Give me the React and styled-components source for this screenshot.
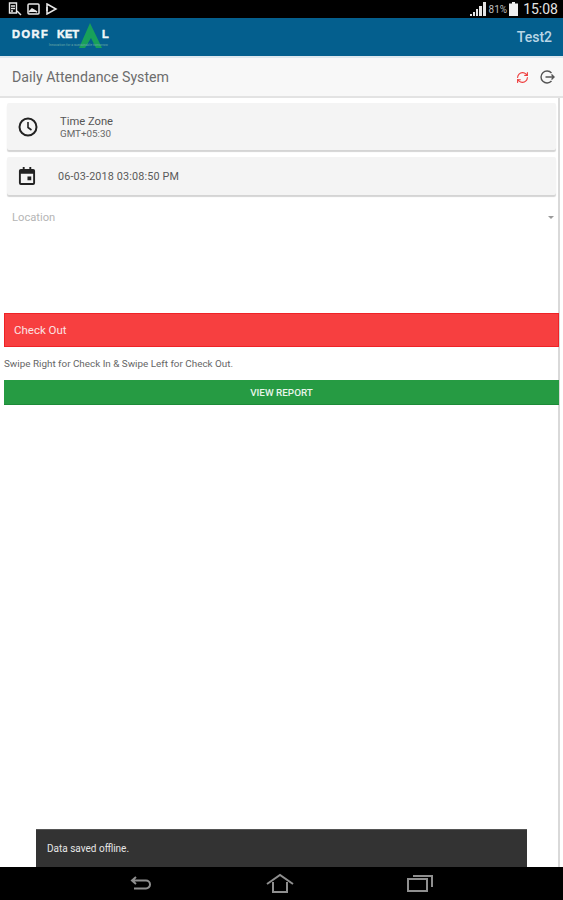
import styled, { createGlobalStyle } from "styled-components";
import { RefreshCw } from "lucide-react";

const GlobalStyle = createGlobalStyle`
  html, body {
    margin: 0;
    padding: 0;
    background: #fff;
    font-family: Roboto, "Liberation Sans", sans-serif;
  }
`;

const Screen = styled.div`
  position: relative;
  width: 563px;
  height: 900px;
  display: flex;
  flex-direction: column;
  overflow: hidden;
  background: #fff;
`;

const StatusBar = styled.div`
  height: 18px;
  background: #000;
  display: flex;
  align-items: center;
  justify-content: space-between;
  padding: 0 5px 0 8px;
  color: #e4e4e4;
`;

const StatusGroup = styled.div`
  display: flex;
  align-items: center;
  gap: ${(props) => props.$gap || 4}px;
`;

const BatteryText = styled.span`
  font-size: 10px;
  color: #bdbdbd;
`;

const Clock = styled.span`
  font-size: 14px;
  margin-left: 3px;
`;

const AppBar = styled.div`
  height: 38px;
  background: #045f8e;
  border-bottom: 2px solid #dfe8ee;
  display: flex;
  align-items: center;
  justify-content: space-between;
  padding: 0 11px 0 12px;
`;

const Logo = styled.div`
  position: relative;
  width: 98px;
  height: 30px;
  margin-top: 2px;
`;

const LogoWord = styled.span`
  position: absolute;
  top: 5px;
  left: ${(props) => props.$left}px;
  font: 900 11px "Liberation Sans", sans-serif;
  letter-spacing: ${(props) => props.$spacing || 0}px;
  color: #f2f6f8;
  -webkit-text-stroke: 0.5px #f2f6f8;
`;

const LogoPeak = styled.svg`
  position: absolute;
  top: 0;
  left: 66px;
`;

const LogoTagline = styled.span`
  position: absolute;
  top: 20px;
  left: 31px;
  width: 65px;
  font-size: 3.5px;
  line-height: 4px;
  text-align: right;
  color: #6aa9a5;
`;

const UserName = styled.span`
  font-size: 14px;
  font-weight: 500;
  color: #b9d6e6;
`;

const TitleBar = styled.div`
  height: 38px;
  flex-shrink: 0;
  background: #f8f8f8;
  border-bottom: 2px solid #e3e3e3;
  display: flex;
  align-items: center;
  justify-content: space-between;
  padding: 0 8px 0 12px;
`;

const Title = styled.span`
  font-size: 14.2px;
  color: #6d6d6d;
`;

const TitleActions = styled.div`
  display: flex;
  align-items: center;
  gap: 10px;
`;

const Content = styled.div`
  flex: 1;
  display: flex;
  flex-direction: column;
  padding: 5px 4px 0 4px;
  border-right: 2px solid #d9d9d9;
  margin-right: 3px;
`;

const InfoCard = styled.div`
  height: ${(props) => props.$height}px;
  margin: 0 -2px 7px 3px;
  background: #f4f4f4;
  border-radius: 2px;
  box-shadow: 0 2px 1px #d4d4d4;
  display: flex;
  align-items: center;
  padding-left: 11px;
  gap: ${(props) => props.$gap}px;
`;

const CardText = styled.div`
  display: flex;
  flex-direction: column;
`;

const CardTitle = styled.span`
  font-size: 11.2px;
  line-height: 13px;
  color: #555;
`;

const CardSub = styled.span`
  font-size: 9.8px;
  line-height: 11px;
  color: #666;
`;

const CardDate = styled.span`
  font-size: 10.8px;
  letter-spacing: 0.15px;
  color: #5a5a5a;
`;

const LocationRow = styled.div`
  height: 30px;
  padding: 0 5px 0 8px;
  margin-right: -5px;
  display: flex;
  align-items: center;
  justify-content: space-between;
`;

const LocationLabel = styled.span`
  font-size: 11.2px;
  color: #b5b5b5;
`;

const Caret = styled.span`
  width: 0;
  height: 0;
  border-left: 3px solid transparent;
  border-right: 3px solid transparent;
  border-top: 3px solid #9a9a9a;
`;

const SwipeBar = styled.div`
  height: 32px;
  margin-top: 81px;
  margin-right: -5px;
  background: #f73f40;
  border: 1px solid #ee2226;
  display: flex;
  align-items: center;
  padding-left: 9px;
  font-size: 11.5px;
  color: #fbe3e3;
`;

const Hint = styled.div`
  height: 33px;
  display: flex;
  align-items: center;
  font-size: 9.9px;
  color: #666;
`;

const ReportButton = styled.div`
  height: 25px;
  margin-right: -5px;
  background: #269b43;
  border-bottom: 1px solid #1d8a38;
  box-sizing: border-box;
  display: flex;
  align-items: center;
  justify-content: center;
  font-size: 9.9px;
  font-weight: 500;
  color: #e8f5ea;
`;

const Toast = styled.div`
  position: absolute;
  left: 36px;
  bottom: 33px;
  width: 491px;
  height: 38px;
  box-sizing: border-box;
  background: #333;
  border-top: 1px solid #555;
  display: flex;
  align-items: center;
  padding-left: 11px;
  font-size: 10px;
  color: #e6e6e6;
`;

const NavBar = styled.div`
  height: 33px;
  flex-shrink: 0;
  background: #000;
  display: grid;
  grid-template-columns: 140px 140px 140px;
  justify-items: center;
  align-items: center;
  padding-bottom: 1px;
  padding-right: 3px;
  box-sizing: border-box;
  justify-content: center;
`;

const NavIcon = styled.svg`
  fill: none;
  stroke: #8f8f8f;
  stroke-width: 2;
`;

function App() {
  return (
    <Screen>
      <GlobalStyle />
      <StatusBar>
        <StatusGroup $gap={5}>
          <svg width="14" height="14" viewBox="0 0 14 14" fill="none" stroke="#e8e8e8" strokeWidth="1.4">
            <path d="M1.5 1h7v10h-7zM3 4h4M3 6.500h4M3 9h2" />
            <path d="M9 9l4 4" />
          </svg>
          <svg width="13" height="12" viewBox="0 0 13 12" fill="none" stroke="#e8e8e8" strokeWidth="1.5">
            <rect x="1" y="1" width="11" height="10" rx="1" />
            <path d="M2 9l3-3 5 3" fill="#e8e8e8" />
          </svg>
          <svg width="13" height="12" viewBox="0 0 13 12" fill="none" stroke="#e8e8e8" strokeWidth="1.5">
            <path d="M2 1l9 5-9 5z" />
            <path d="M2 4v4" />
          </svg>
        </StatusGroup>
        <StatusGroup $gap={2}>
          <svg width="17" height="14" viewBox="0 0 17 14" fill="#e4e4e4">
            <path d="M0 12h2v2H0zM3 10h2v4H3zM6 7h2v7H6zM9 4h3v10H9zM13 0h3v14h-3z" />
          </svg>
          <BatteryText>81%</BatteryText>
          <svg width="9" height="14" viewBox="0 0 9 14" fill="#eee">
            <path d="M3 0h3v1.500h3V14H0V1.500h3z" />
          </svg>
          <Clock>15:08</Clock>
        </StatusGroup>
      </StatusBar>

      <AppBar>
        <Logo>
          <LogoWord $left={0} $spacing={1.5}>DORF</LogoWord>
          <LogoWord $left={45}>KET</LogoWord>
          <LogoPeak width="24" height="27" viewBox="0 0 24 27">
            <path d="M12 0l12 25h-6l-5-10-6 10H1z" fill="#18a05a" />
          </LogoPeak>
          <LogoWord $left={90}>L</LogoWord>
          <LogoTagline>Innovation for a sustainable tomorrow</LogoTagline>
        </Logo>
        <UserName>Test2</UserName>
      </AppBar>

      <TitleBar>
        <Title>Daily Attendance System</Title>
        <TitleActions>
          <RefreshCw size={13} color="#ee3b3b" strokeWidth={2} />
          <svg width="16" height="16" viewBox="0 0 16 16" fill="none" stroke="#555" strokeWidth="1.4">
            <path d="M12.500 4A6 6 0 1 0 12.500 12" />
            <path d="M6.500 8H15M12.500 5.500L15 8l-2.500 2.500" />
          </svg>
        </TitleActions>
      </TitleBar>

      <Content>
        <InfoCard $height={47} $gap={22}>
          <svg width="20" height="20" viewBox="0 0 20 20" fill="none" stroke="#222" strokeWidth="2">
            <circle cx="10" cy="10" r="8.500" />
            <path d="M10 5v5.500l3.500 2.500" strokeWidth="1.600" />
          </svg>
          <CardText>
            <CardTitle>Time Zone</CardTitle>
            <CardSub>GMT+05:30</CardSub>
          </CardText>
        </InfoCard>
        <InfoCard $height={38} $gap={22}>
          <svg width="18" height="18" viewBox="0 0 19 19" fill="#222">
            <path d="M3 2h2V0h2v2h5V0h2v2h2a2 2 0 0 1 2 2v13a2 2 0 0 1-2 2H3a2 2 0 0 1-2-2V4a2 2 0 0 1 2-2zm0 5v10h13V7z" />
            <rect x="10" y="10" width="4" height="4" />
          </svg>
          <CardDate>06-03-2018 03:08:50 PM</CardDate>
        </InfoCard>
        <LocationRow>
          <LocationLabel>Location</LocationLabel>
          <Caret />
        </LocationRow>
        <SwipeBar>Check Out</SwipeBar>
        <Hint>Swipe Right for Check In &amp; Swipe Left for Check Out.</Hint>
        <ReportButton>VIEW REPORT</ReportButton>
      </Content>

      <Toast>Data saved offline.</Toast>

      <NavBar>
        <NavIcon width="24" height="18" viewBox="0 0 24 18">
          <path d="M8 3l-4 3.500 4 3.500M4 6.500h14a3.500 3.500 0 0 1 0 8H6" />
        </NavIcon>
        <NavIcon width="30" height="20" viewBox="0 0 30 20">
          <path d="M2 11L15 2l13 9M8 9v10h14V9" />
        </NavIcon>
        <NavIcon width="26" height="18" viewBox="0 0 26 18">
          <rect x="1" y="5" width="19" height="12" />
          <path d="M6 2h19v11" />
        </NavIcon>
      </NavBar>
    </Screen>
  );
}

export default App;
